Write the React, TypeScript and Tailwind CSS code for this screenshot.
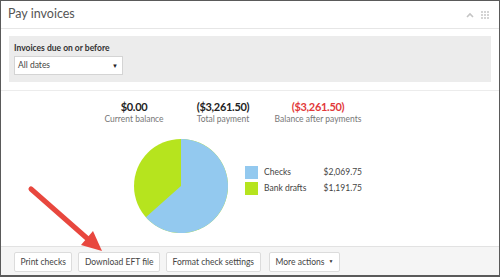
import React from 'react';

const font = { fontFamily: 'Lato, "Open Sans", "Liberation Sans", sans-serif' };

const stats = [
  { value: '$0.00', label: 'Current balance', red: false, w: 'w-[90px]' },
  { value: '($3,261.50)', label: 'Total payment', red: false, w: 'w-[88px]' },
  { value: '($3,261.50)', label: 'Balance after payments', red: true, w: 'w-[102px]' },
];

const legend = [
  { name: 'Checks', amount: '$2,069.75', color: 'bg-[#93c9ef]' },
  { name: 'Bank drafts', amount: '$1,191.75', color: 'bg-[#b6e41e]' },
];

const Pie: React.FC = () => {
  const checks = 2069.75;
  const total = 3261.5;
  const r = 47;
  const cx = 48;
  const cy = 48;
  const a = (checks / total) * Math.PI * 2;
  const ex = cx + r * Math.sin(a);
  const ey = cy - r * Math.cos(a);
  return (
    <svg width="96" height="96" viewBox="0 0 96 96">
      <circle cx={cx} cy={cy} r={r} fill="#b6e41e" />
      <path
        d={`M${cx} ${cy} L${cx} ${cy - r} A${r} ${r} 0 1 1 ${ex} ${ey} Z`}
        fill="#93c9ef"
      />
    </svg>
  );
};

const App: React.FC = () => {
  const buttons = ['Print checks', 'Download EFT file', 'Format check settings'];

  return (
    <div
      className="relative w-[500px] h-[277px] bg-white border border-b-2 border-[#5a5a5a] flex flex-col overflow-hidden"
      style={font}
    >
      {/* header */}
      <div className="h-[28px] flex items-center justify-between pl-[7px] pr-[10px] border-b border-[#e6e6e6]">
        <h2 className="text-[12.5px] text-[#555] font-normal leading-none">Pay invoices</h2>
        <div className="flex items-center gap-[7px]">
          <svg width="8" height="6" viewBox="0 0 8 6">
            <path d="M1 5 L4 2 L7 5" fill="none" stroke="#c4c4c4" strokeWidth="1.6" />
          </svg>
          <div className="grid grid-cols-3 gap-[1px]">
            {Array.from({ length: 9 }).map((_, i) => (
              <div key={i} className="w-[2px] h-[2px] bg-[#d4d4d4]" />
            ))}
          </div>
        </div>
      </div>

      {/* filter */}
      <div className="px-[8px] pt-[7px] pb-[8px] border-b border-[#ececec]">
        <div className="bg-[#ececec] h-[46px] pl-[5px] pt-[6px]">
          <label className="block text-[8.5px] leading-[12px] font-bold text-[#333]">
            Invoices due on or before
          </label>
          <div className="mt-[2px] w-[109px] h-[19px] bg-white border border-[#d4d4d4] flex items-center justify-between pl-[3px] pr-[4px]">
            <span className="text-[8.5px] text-[#444]">All dates</span>
            <span className="text-[6px] text-[#222]">▼</span>
          </div>
        </div>
      </div>

      {/* summary */}
      <div className="flex-1">
        <div className="flex pl-[88px] pt-[10px]">
          {stats.map((s, i) => (
            <div key={i} className={`${s.w} flex flex-col items-center whitespace-nowrap`}>
              <span
                className={`text-[11px] leading-[12px] font-bold tracking-[-0.3px] ${s.red ? 'text-[#e2393a]' : 'text-[#222]'}`}
              >
                {s.value}
              </span>
              <span className="text-[8.5px] leading-[12px] text-[#777]">{s.label}</span>
            </div>
          ))}
        </div>

        <div className="flex items-start pl-[132px] mt-[13px]">
          <Pie />
          <div className="ml-[16px] mt-[28px] flex flex-col gap-[3px]">
            {legend.map((l) => (
              <div key={l.name} className="flex items-center h-[13px]">
                <div className={`w-[13px] h-[13px] ${l.color}`} />
                <span className="ml-[6px] w-[49px] text-[8.5px] text-[#444] whitespace-nowrap">{l.name}</span>
                <span className="w-[49px] text-right text-[8.5px] text-[#444] whitespace-nowrap">{l.amount}</span>
              </div>
            ))}
          </div>
        </div>
      </div>

      {/* footer */}
      <div className="h-[29px] bg-[#f5f5f5] border-t border-[#e2e2e2] flex items-start gap-[6px] pl-[13px] pt-[5px]">
        {buttons.map((b) => (
          <button
            key={b}
            className="h-[20px] px-[5.5px] bg-white border border-[#dcdcdc] rounded-[2px] text-[8.5px] text-[#444] whitespace-nowrap"
          >
            {b}
          </button>
        ))}
        <button className="h-[20px] ml-[2px] px-[6px] bg-white border border-[#dcdcdc] rounded-[2px] text-[8.5px] text-[#444] whitespace-nowrap flex items-center gap-[4px]">
          More actions
          <span className="text-[5px] text-[#333]">▼</span>
        </button>
      </div>

      {/* annotation arrow */}
      <svg className="absolute left-0 top-0 pointer-events-none" width="500" height="277" viewBox="0 0 500 277">
        <line x1="30" y1="188" x2="88" y2="239" stroke="#e8473e" strokeWidth="5" strokeLinecap="round" />
        <polygon points="101,250 80,244 92,230" fill="#e8473e" />
      </svg>
    </div>
  );
};

export default App;
